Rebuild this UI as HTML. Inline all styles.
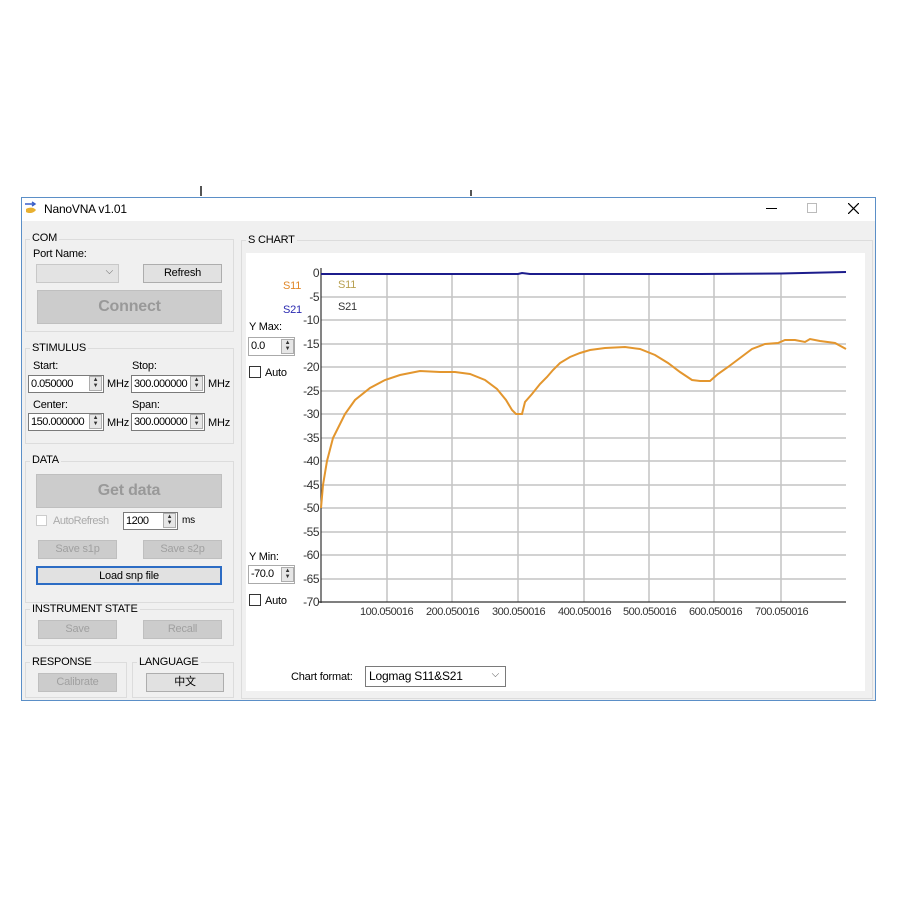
<!DOCTYPE html>
<html><head><meta charset="utf-8"><style>
*{margin:0;padding:0;box-sizing:border-box}
body{width:900px;height:900px;background:#fff;position:relative;font-family:"Liberation Sans","Noto Sans CJK SC",sans-serif;font-size:11px;color:#000;overflow:hidden;letter-spacing:-0.2px}
.a{position:absolute}
.win{left:21px;top:197px;width:855px;height:504px;border:1px solid #5b8fc7;background:#f0f0f0}
.tb{left:22px;top:198px;width:853px;height:23px;background:#fff}
.grp{border:1px solid #dcdcdc}
.lbl{background:#f0f0f0;padding:0 2px;font-size:11px}
.btn{background:#e1e1e1;border:1px solid #adadad;text-align:center}
.dis{background:#cccccc;border:1px solid #bfbfbf;color:#a0a0a0;text-align:center}
.inp{background:#fff;border:1px solid #7a7a7a;padding-left:2px;font-size:11px;line-height:16px;letter-spacing:-0.5px;overflow:hidden;white-space:nowrap}
.spin{background:#e6e6e6;border:1px solid #adadad;width:13px;height:15px;font-size:6px;line-height:6px;text-align:center;color:#333}
.cb{width:12px;height:12px;border:1px solid #333;background:#fff}
.yl{font-size:12px;color:#333;text-align:right;width:30px;letter-spacing:-0.5px}
.xl{font-size:11px;color:#333;letter-spacing:-0.5px}
</style></head><body>
<div class="a" style="left:200px;top:186px;width:2px;height:10px;background:#555"></div>
<div class="a" style="left:470px;top:190px;width:2px;height:6px;background:#555"></div>
<div class="a win"></div>
<div class="a tb"></div>
<svg class="a" style="left:24px;top:201px" width="16" height="14"><path d="M1 3h10M8 1l3 2-3 2" stroke="#3a5fc8" stroke-width="1.4" fill="none"/><path d="M2 8c3-2 8-2 10 1-2 3-7 4-10 2z" fill="#e8b030"/></svg>
<div class="a" style="left:44px;top:202px;font-size:12px">NanoVNA v1.01</div>
<div class="a" style="left:766px;top:208px;width:11px;height:1px;background:#000"></div>
<div class="a" style="left:807px;top:203px;width:10px;height:10px;border:1px solid #bbb"></div>
<svg class="a" style="left:848px;top:203px" width="11" height="11"><path d="M0 0L11 11M11 0L0 11" stroke="#000" stroke-width="1.2"/></svg>

<!-- COM -->
<div class="a grp" style="left:25px;top:239px;width:209px;height:93px"></div>
<div class="a lbl" style="left:30px;top:232px">COM</div>
<div class="a" style="left:33px;top:248px">Port Name:</div>
<div class="a" style="left:36px;top:264px;width:83px;height:19px;background:#e3e3e3;border:1px solid #c8c8c8"><span class="a" style="right:5px;top:1px;font-size:10px;color:#666">⌵</span></div>
<div class="a btn" style="left:143px;top:264px;width:79px;height:19px;line-height:17px">Refresh</div>
<div class="a dis" style="left:37px;top:290px;width:185px;height:34px;line-height:32px;font-size:16px;font-weight:bold;color:#999">Connect</div>

<!-- STIMULUS -->
<div class="a grp" style="left:25px;top:348px;width:209px;height:96px"></div>
<div class="a lbl" style="left:30px;top:342px">STIMULUS</div>
<div class="a" style="left:33px;top:360px">Start:</div>
<div class="a" style="left:132px;top:360px">Stop:</div>
<div class="a inp" style="left:28px;top:375px;width:76px;height:18px">0.050000</div>
<div class="a spin" style="left:89px;top:376px">▲<br>▼</div>
<div class="a" style="left:107px;top:378px">MHz</div>
<div class="a inp" style="left:131px;top:375px;width:74px;height:18px">300.000000</div>
<div class="a spin" style="left:190px;top:376px">▲<br>▼</div>
<div class="a" style="left:208px;top:378px">MHz</div>
<div class="a" style="left:33px;top:399px">Center:</div>
<div class="a" style="left:132px;top:399px">Span:</div>
<div class="a inp" style="left:28px;top:413px;width:76px;height:18px">150.000000</div>
<div class="a spin" style="left:89px;top:414px">▲<br>▼</div>
<div class="a" style="left:107px;top:417px">MHz</div>
<div class="a inp" style="left:131px;top:413px;width:74px;height:18px">300.000000</div>
<div class="a spin" style="left:190px;top:414px">▲<br>▼</div>
<div class="a" style="left:208px;top:417px">MHz</div>

<!-- DATA -->
<div class="a grp" style="left:25px;top:461px;width:209px;height:142px"></div>
<div class="a lbl" style="left:30px;top:454px">DATA</div>
<div class="a dis" style="left:36px;top:474px;width:186px;height:34px;line-height:32px;font-size:16px;font-weight:bold;color:#999">Get data</div>
<div class="a" style="left:36px;top:515px;width:11px;height:11px;border:1px solid #ccc;background:#fff"></div>
<div class="a" style="left:53px;top:515px;color:#aaa;letter-spacing:-0.5px">AutoRefresh</div>
<div class="a inp" style="left:123px;top:512px;width:55px;height:18px">1200</div>
<div class="a spin" style="left:163px;top:513px">▲<br>▼</div>
<div class="a" style="left:182px;top:515px;font-size:10px">ms</div>
<div class="a dis" style="left:38px;top:540px;width:79px;height:19px;line-height:17px">Save s1p</div>
<div class="a dis" style="left:143px;top:540px;width:79px;height:19px;line-height:17px">Save s2p</div>
<div class="a btn" style="left:36px;top:566px;width:186px;height:19px;line-height:16px;border:2px solid #2c6cc4">Load snp file</div>

<!-- INSTRUMENT -->
<div class="a grp" style="left:25px;top:609px;width:209px;height:37px"></div>
<div class="a lbl" style="left:30px;top:603px">INSTRUMENT STATE</div>
<div class="a dis" style="left:38px;top:620px;width:79px;height:19px;line-height:17px">Save</div>
<div class="a dis" style="left:143px;top:620px;width:79px;height:19px;line-height:17px">Recall</div>

<div class="a grp" style="left:25px;top:662px;width:102px;height:36px"></div>
<div class="a lbl" style="left:30px;top:656px">RESPONSE</div>
<div class="a dis" style="left:38px;top:673px;width:79px;height:19px;line-height:17px">Calibrate</div>
<div class="a grp" style="left:132px;top:662px;width:102px;height:36px"></div>
<div class="a lbl" style="left:137px;top:656px">LANGUAGE</div>
<div class="a btn" style="left:146px;top:673px;width:78px;height:19px;line-height:17px">中文</div>

<!-- S CHART -->
<div class="a grp" style="left:241px;top:240px;width:632px;height:459px"></div>
<div class="a lbl" style="left:246px;top:234px">S CHART</div>
<div class="a" style="left:246px;top:253px;width:619px;height:438px;background:#fff"></div>
<div class="a" style="left:283px;top:280px;color:#e0882a;font-size:11px">S11</div>
<div class="a" style="left:283px;top:304px;color:#2a2ab0;font-size:11px">S21</div>
<div class="a" style="left:338px;top:279px;color:#b8a050;font-size:11px">S11</div>
<div class="a" style="left:338px;top:301px;color:#333;font-size:11px">S21</div>
<div class="a" style="left:249px;top:321px">Y Max:</div>
<div class="a inp" style="left:248px;top:337px;width:47px;height:19px;border-color:#aaa">0.0</div>
<div class="a spin" style="left:281px;top:339px">▲<br>▼</div>
<div class="a cb" style="left:249px;top:366px"></div>
<div class="a" style="left:265px;top:367px">Auto</div>
<div class="a" style="left:249px;top:551px">Y Min:</div>
<div class="a inp" style="left:248px;top:565px;width:47px;height:19px;border-color:#aaa">-70.0</div>
<div class="a spin" style="left:281px;top:567px">▲<br>▼</div>
<div class="a cb" style="left:249px;top:594px"></div>
<div class="a" style="left:265px;top:595px">Auto</div>

<div class="a yl" style="left:289px;top:266px">0</div>
<div class="a yl" style="left:289px;top:290px">-5</div>
<div class="a yl" style="left:289px;top:313px">-10</div>
<div class="a yl" style="left:289px;top:337px">-15</div>
<div class="a yl" style="left:289px;top:360px">-20</div>
<div class="a yl" style="left:289px;top:384px">-25</div>
<div class="a yl" style="left:289px;top:407px">-30</div>
<div class="a yl" style="left:289px;top:431px">-35</div>
<div class="a yl" style="left:289px;top:454px">-40</div>
<div class="a yl" style="left:289px;top:478px">-45</div>
<div class="a yl" style="left:289px;top:501px">-50</div>
<div class="a yl" style="left:289px;top:525px">-55</div>
<div class="a yl" style="left:289px;top:548px">-60</div>
<div class="a yl" style="left:289px;top:572px">-65</div>
<div class="a yl" style="left:289px;top:595px">-70</div>

<svg class="a" style="left:0;top:0" width="900" height="900">
<g stroke="#c4c4c4" stroke-width="1.5">
<line x1="321" y1="297" x2="846" y2="297"/><line x1="321" y1="320" x2="846" y2="320"/><line x1="321" y1="344" x2="846" y2="344"/><line x1="321" y1="367" x2="846" y2="367"/><line x1="321" y1="391" x2="846" y2="391"/><line x1="321" y1="414" x2="846" y2="414"/><line x1="321" y1="438" x2="846" y2="438"/><line x1="321" y1="461" x2="846" y2="461"/><line x1="321" y1="485" x2="846" y2="485"/><line x1="321" y1="508" x2="846" y2="508"/><line x1="321" y1="532" x2="846" y2="532"/><line x1="321" y1="555" x2="846" y2="555"/><line x1="321" y1="579" x2="846" y2="579"/>
<line x1="387" y1="273" x2="387" y2="602"/><line x1="452" y1="273" x2="452" y2="602"/><line x1="518" y1="273" x2="518" y2="602"/><line x1="584" y1="273" x2="584" y2="602"/><line x1="649" y1="273" x2="649" y2="602"/><line x1="714" y1="273" x2="714" y2="602"/><line x1="781" y1="273" x2="781" y2="602"/>
</g>
<line x1="321" y1="268" x2="321" y2="603" stroke="#333" stroke-width="1.2"/>
<line x1="318" y1="602" x2="846" y2="602" stroke="#333" stroke-width="1.2"/>
<polyline fill="none" stroke="#1c1c8c" stroke-width="2" points="321,274 518,274 522,273 530,274 650,274 700,274 781,273.5 846,272"/>
<polyline fill="none" stroke="#e3962e" stroke-width="2" points="321,508 323,485 327,461 333,438 345,414 355,400 370,388 385,380 400,375 420,371 440,372 455,372 470,374 485,380 497,389 506,400 512,410 516,414 522,414 525,402 532,394 540,384 547,377 553,370 560,363 570,357 580,353 590,350 605,348 625,347 640,349 655,355 668,363 680,372 692,380 700,381 710,381 718,374 728,367 740,358 752,349 765,344 778,343 785,340 795,340 805,342 810,339 820,341 835,343 846,349"/>
</svg>
<div class="a xl" style="left:360px;top:606px">100.050016</div>
<div class="a xl" style="left:426px;top:606px">200.050016</div>
<div class="a xl" style="left:492px;top:606px">300.050016</div>
<div class="a xl" style="left:558px;top:606px">400.050016</div>
<div class="a xl" style="left:623px;top:606px">500.050016</div>
<div class="a xl" style="left:689px;top:606px">600.050016</div>
<div class="a xl" style="left:755px;top:606px">700.050016</div>

<div class="a" style="left:291px;top:671px">Chart format:</div>
<div class="a" style="left:365px;top:666px;width:141px;height:21px;border:1px solid #7a7a7a;background:#fff;padding:2px 0 0 3px;font-size:12px">Logmag S11&amp;S21<span class="a" style="right:6px;top:2px;font-size:10px;color:#555">⌵</span></div>
</body></html>
